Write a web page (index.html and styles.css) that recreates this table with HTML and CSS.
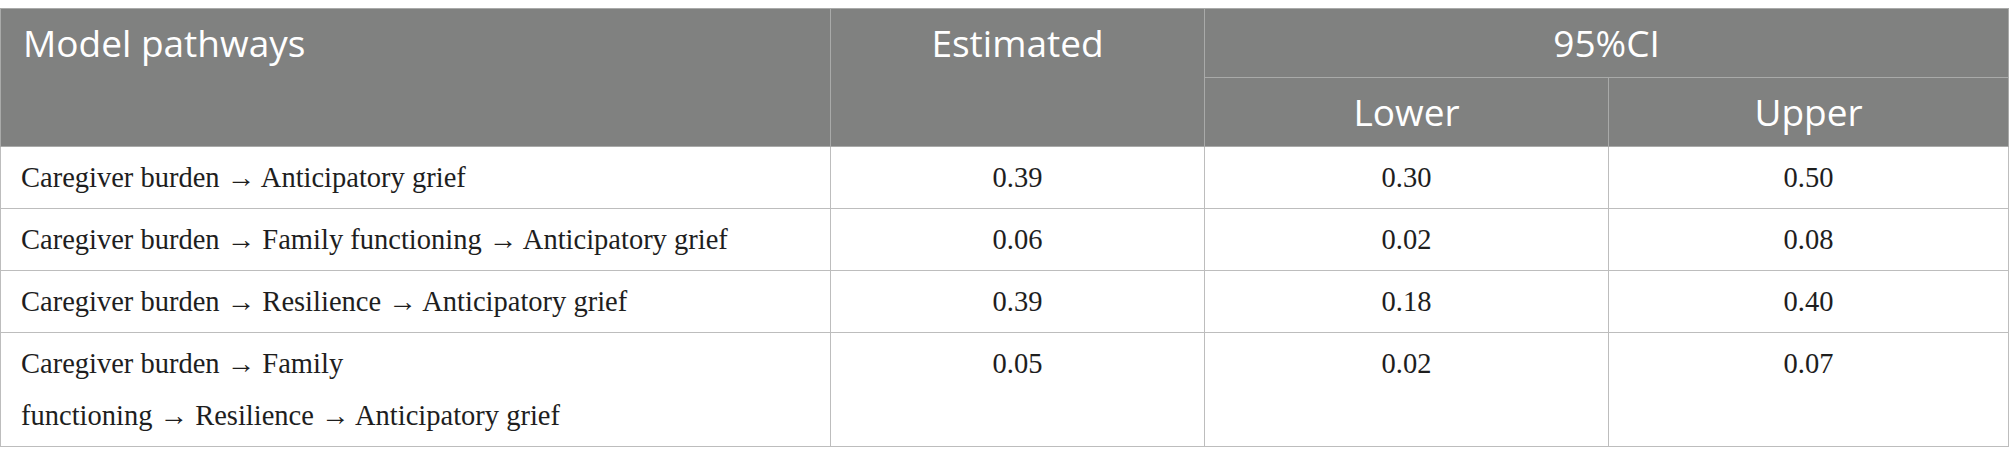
FILE: index.html
```html
<!DOCTYPE html>
<html>
<head>
<meta charset="utf-8">
<link rel="stylesheet" href="styles.css">
</head>
<body>
<table class="results">
  <colgroup>
    <col class="c-path">
    <col class="c-est">
    <col class="c-low">
    <col class="c-up">
  </colgroup>
  <thead>
    <tr class="h1">
      <th rowspan="2" class="left">Model pathways</th>
      <th rowspan="2">Estimated</th>
      <th colspan="2">95%CI</th>
    </tr>
    <tr class="h2">
      <th>Lower</th>
      <th>Upper</th>
    </tr>
  </thead>
  <tbody>
    <tr>
      <td class="left">Caregiver burden → Anticipatory grief</td>
      <td>0.39</td>
      <td>0.30</td>
      <td>0.50</td>
    </tr>
    <tr>
      <td class="left">Caregiver burden → Family functioning → Anticipatory grief</td>
      <td>0.06</td>
      <td>0.02</td>
      <td>0.08</td>
    </tr>
    <tr>
      <td class="left">Caregiver burden → Resilience → Anticipatory grief</td>
      <td>0.39</td>
      <td>0.18</td>
      <td>0.40</td>
    </tr>
    <tr>
      <td class="left">Caregiver burden → Family<br>functioning → Resilience → Anticipatory grief</td>
      <td>0.05</td>
      <td>0.02</td>
      <td>0.07</td>
    </tr>
  </tbody>
</table>
</body>
</html>
```

FILE: styles.css
```css
html, body {
  margin: 0;
  padding: 0;
  background: #ffffff;
}

body {
  padding-top: 8px;
}

.results {
  border-collapse: collapse;
  table-layout: fixed;
  width: 2008px;
  border: 1px solid #b4b4b4;
}

.c-path { width: 830px; }
.c-est { width: 374px; }
.c-low { width: 404px; }
.c-up { width: 400px; }

.results th {
  background: #808180;
  color: #ffffff;
  font-family: "Open Sans", "DejaVu Sans", sans-serif;
  font-weight: 400;
  font-size: 37px;
  line-height: 52px;
  padding: 8px 20px 8px 20px;
  text-align: center;
  vertical-align: top;
  border: 1px solid #a9aaa9;
}

.results th.left {
  text-align: left;
  padding-left: 22px;
}

.results td {
  font-family: "Liberation Serif", "Times New Roman", serif;
  font-size: 28.5px;
  line-height: 52px;
  color: #1e1e1e;
  padding: 5px 20px 4px 20px;
  text-align: center;
  vertical-align: top;
  border: 1px solid #bdbdbd;
}

.results td.left {
  text-align: left;
}

.results tbody tr {
  border-top: 1px solid #acacac;
}
```
